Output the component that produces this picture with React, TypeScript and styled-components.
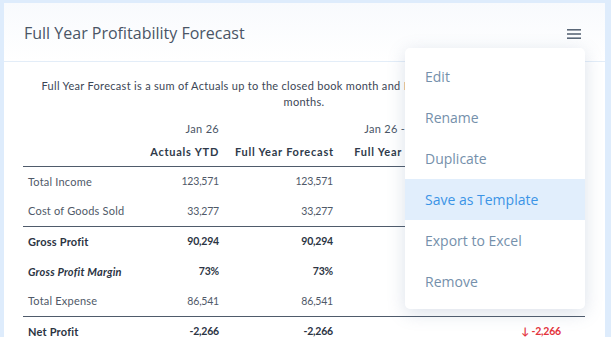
import React from "react";
import styled, { createGlobalStyle } from "styled-components";

const Global = createGlobalStyle`
  html, body { margin: 0; padding: 0; background: #deecfc; overflow: hidden; }
  * { box-sizing: border-box; }
`;

const Page = styled.div`
  width: 611px;
  height: 337px;
  padding: 3px 6px 0 4px;
  background: #deecfc;
  overflow: hidden;
`;

const Card = styled.div`
  position: relative;
  background: #ffffff;
  height: 334px;
  overflow: hidden;
`;

const Header = styled.div`
  height: 59px;
  display: flex;
  align-items: center;
  justify-content: space-between;
  padding: 0 24px 0 20px;
  border-bottom: 1px solid #e3edf8;
  background: linear-gradient(#f8fafd, #ffffff);
`;

const Title = styled.h2`
  margin: 0;
  font-family: "Open Sans", sans-serif;
  font-weight: 400;
  font-size: 16px;
  color: #4a5566;
  padding-top: 2px;
`;

const MenuButton = styled.button`
  border: 0;
  background: transparent;
  padding: 0;
  display: flex;
  width: 14px;
  height: 10px;
  margin-top: 4px;
  cursor: pointer;
`;

const Content = styled.div`
  padding: 16px 20px 0 19px;
`;

const Note = styled.p`
  margin: 0 0 8px;
  font-family: "Lato", sans-serif;
  font-size: 11px;
  line-height: 16px;
  color: #3c4656;
  text-align: center;
  letter-spacing: 0.3px;
`;

const Table = styled.table`
  width: 562px;
  border-collapse: collapse;
  table-layout: fixed;
  font-family: "Lato", sans-serif;
  font-size: 11px;
  color: #4a5566;
`;

const Th = styled.th<{ $top?: boolean }>`
  text-align: right;
  padding: ${(p) => (p.$top ? "4px 8px" : "5px 8px 7px")};
  height: ${(p) => (p.$top ? "22px" : "26px")};
  vertical-align: top;
  font-weight: ${(p) => (p.$top ? 400 : 700)};
  color: ${(p) => (p.$top ? "#4a5566" : "#2f3a4a")};
  white-space: nowrap;
  overflow: hidden;
  letter-spacing: ${(p) => (p.$top ? "0.3px" : "0.75px")};
`;

const Tr = styled.tr<{ $line?: boolean }>`
  border-top: ${(p) => (p.$line ? "1px solid #4f5b6b" : "none")};
`;

const Td = styled.td<{ $label?: boolean; $bold?: boolean; $italic?: boolean; $red?: boolean; $last?: boolean }>`
  height: 30px;
  padding: 0 ${(p) => (p.$last ? "24px" : "8px")} 0 ${(p) => (p.$label ? "5px" : "8px")};
  text-align: ${(p) => (p.$label ? "left" : "right")};
  font-size: ${(p) => (p.$label ? "11px" : "10.5px")};
  font-weight: ${(p) => (p.$bold ? 700 : 400)};
  font-style: ${(p) => (p.$italic ? "italic" : "normal")};
  color: ${(p) => (p.$red ? "#e3343c" : p.$bold ? "#2b3443" : "#4f5968")};
  white-space: nowrap;
  letter-spacing: ${(p) => (p.$label ? "0.2px" : "-0.2px")};
`;

const Menu = styled.ul`
  position: absolute;
  left: 401px;
  top: 45px;
  width: 180px;
  margin: 0;
  padding: 8px 0 7px;
  list-style: none;
  background: #ffffff;
  border-radius: 5px;
  box-shadow: 0 4px 18px rgba(90, 120, 160, 0.22);
`;

const MenuItem = styled.li<{ $active?: boolean }>`
  height: 41px;
  display: flex;
  align-items: center;
  padding: 0 20px;
  font-family: "Open Sans", sans-serif;
  font-size: 14px;
  color: ${(p) => (p.$active ? "#3b94e6" : "#7590ab")};
  background: ${(p) => (p.$active ? "#e1eefc" : "transparent")};
`;

type Row = {
  label: string;
  a: string;
  f: string;
  b?: string;
  v?: string;
  bold?: boolean;
  italic?: boolean;
  line?: boolean;
};

const rows: Row[] = [
  { label: "Total Income", a: "123,571", f: "123,571" },
  { label: "Cost of Goods Sold", a: "33,277", f: "33,277" },
  { label: "Gross Profit", a: "90,294", f: "90,294", bold: true, line: true },
  { label: "Gross Profit Margin", a: "73%", f: "73%", bold: true, italic: true },
  { label: "Total Expense", a: "86,541", f: "86,541" },
  { label: "Net Profit", a: "-2,266", f: "-2,266", v: "↓ -2,266", bold: true, line: true },
];

const items = ["Edit", "Rename", "Duplicate", "Save as Template", "Export to Excel", "Remove"];

export default function App() {
  return (
    <>
      <Global />
      <Page>
        <Card>
          <Header>
            <Title>Full Year Profitability Forecast</Title>
            <MenuButton aria-label="menu">
              <svg width="14" height="10" viewBox="0 0 14 10">
                <rect x="0" y="0" width="14" height="1.6" fill="#5b6878" />
                <rect x="0" y="4.2" width="14" height="1.6" fill="#5b6878" />
                <rect x="0" y="8.4" width="14" height="1.6" fill="#5b6878" />
              </svg>
            </MenuButton>
          </Header>
          <Content>
            <Note>
              Full Year Forecast is a sum of Actuals up to the closed book month and Forecast for the remaining open
              <br />
              months.
            </Note>
            <Table>
              <colgroup>
                <col style={{ width: 97 }} />
                <col style={{ width: 107 }} />
                <col style={{ width: 114 }} />
                <col style={{ width: 112 }} />
                <col style={{ width: 132 }} />
              </colgroup>
              <thead>
                <tr>
                  <Th $top />
                  <Th $top>Jan 26</Th>
                  <Th $top />
                  <Th $top>Jan 26 - Dec 26</Th>
                  <Th $top />
                </tr>
                <tr>
                  <Th />
                  <Th>Actuals YTD</Th>
                  <Th>Full Year Forecast</Th>
                  <Th>Full Year Budget</Th>
                  <Th>Variance</Th>
                </tr>
              </thead>
              <tbody>
                {rows.map((r, i) => (
                  <Tr key={r.label} $line={i === 0 || r.line}>
                    <Td $label $bold={r.bold} $italic={r.italic}>{r.label}</Td>
                    <Td $bold={r.bold}>{r.a}</Td>
                    <Td $bold={r.bold}>{r.f}</Td>
                    <Td $bold={r.bold}>{r.b ?? ""}</Td>
                    <Td $bold={r.bold} $red $last>{r.v ?? ""}</Td>
                  </Tr>
                ))}
              </tbody>
            </Table>
          </Content>
          <Menu>
            {items.map((t) => (
              <MenuItem key={t} $active={t === "Save as Template"}>{t}</MenuItem>
            ))}
          </Menu>
        </Card>
      </Page>
    </>
  );
}
